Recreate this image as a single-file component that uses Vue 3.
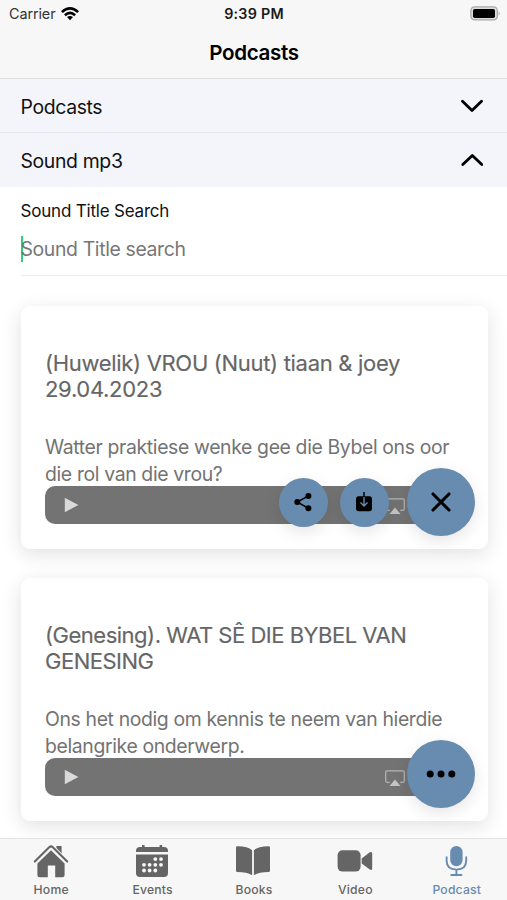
<script setup>
import { ref } from 'vue'

const cards = ref([
  {
    title: ['(Huwelik) VROU (Nuut) tiaan & joey', '29.04.2023'],
    body: ['Watter praktiese wenke gee die Bybel ons oor', 'die rol van die vrou?'],
    open: true,
  },
  {
    title: ['(Genesing). WAT SÊ DIE BYBEL VAN', 'GENESING'],
    body: ['Ons het nodig om kennis te neem van hierdie', 'belangrike onderwerp.'],
    open: false,
  },
])
const tabs = ['Home', 'Events', 'Books', 'Video', 'Podcast']
const active = 'Podcast'
</script>

<template>
  <div class="screen">
    <header class="header">
      <div class="status">
        <div class="carrier">
          <span>Carrier</span>
          <svg class="wifi" viewBox="0 0 18 14" width="18" height="14">
            <g fill="none" stroke="#000" stroke-width="2.6">
              <path d="M.9 5.1Q9-2.3 17.1 5.1" />
              <path d="M3.9 8.3Q9 3.6 14.1 8.3" />
            </g>
            <path d="M6 10.1Q9 7.7 12 10.1L9 13.2Z" fill="#000" />
          </svg>
        </div>
        <div class="clock">9:39 PM</div>
        <div class="power">
          <svg viewBox="0 0 31 15" width="31" height="15">
            <rect x=".9" y=".9" width="26.4" height="13" rx="3.6" fill="#ddd" stroke="#a9a9a9" stroke-width="1.3" />
            <rect x="3" y="3" width="22" height="9" rx="1.8" fill="#000" />
            <path d="M28.6 5.2q2.2 2.2 0 4.6z" fill="#aaa" />
          </svg>
        </div>
      </div>
      <h1 class="heading">Podcasts</h1>
    </header>

    <main class="content">
      <div class="row row-line">
        <span>Podcasts</span>
        <svg viewBox="0 0 22 14" width="22" height="14"><path d="M1.5 2.2 11 11.4 20.5 2.2" class="chevron" /></svg>
      </div>
      <div class="row">
        <span>Sound mp3</span>
        <svg viewBox="0 0 22 14" width="22" height="14"><path d="M1.8 11.6 11.3 2.4 20.8 11.6" class="chevron" /></svg>
      </div>

      <div class="field">
        <label class="label">Sound Title Search</label>
        <div class="input"><span class="caret"></span><span class="placeholder">Sound Title search</span></div>
      </div>

      <section v-for="(card, i) in cards" :key="i" class="card">
        <h2 class="title" :class="'title-' + i">
          <span v-for="line in card.title" :key="line">{{ line }}</span>
        </h2>
        <p class="body">
          <span v-for="line in card.body" :key="line">{{ line }}</span>
        </p>
        <div class="player">
          <svg viewBox="0 0 15 16" width="15" height="16"><path d="M.8.8 14.4 8 .8 15.2Z" fill="#d9d9d9" /></svg>
          <svg class="airplay" viewBox="0 0 20 17" width="20" height="17">
            <path d="M4.7 12.3H2.2Q.7 12.3.7 10.8V2.2Q.7.8 2.2.8H17.8Q19.3.8 19.3 2.2V10.8Q19.3 12.3 17.8 12.3H15.3" fill="none" stroke="#b5b5b5" stroke-width="1.2" />
            <path d="M10 9.6 15.5 16H4.5Z" fill="#c4c4c4" />
          </svg>
        </div>
        <div class="actions">
          <template v-if="card.open">
            <button class="fab small">
              <svg viewBox="0 0 18 20" width="18" height="20">
                <path d="M14.3 3.9 3.4 10.1 14.3 16.2" fill="none" stroke="#000" stroke-width="1.6" />
                <circle cx="14.4" cy="3.9" r="3" /><circle cx="3.3" cy="10.1" r="3" /><circle cx="14.4" cy="16.2" r="3" />
              </svg>
            </button>
            <button class="fab small">
              <svg viewBox="0 0 18 20" width="18" height="20">
                <rect x="1" y="4.3" width="16" height="15" rx="2.7" />
                <path d="M9 5v8.6M5.5 10.4 9 14l3.5-3.6" fill="none" stroke="#688bb0" stroke-width="1.4" />
                <path d="M9 .3v4.2" stroke="#000" stroke-width="1.5" stroke-linecap="round" />
              </svg>
            </button>
          </template>
          <button class="fab">
            <svg v-if="card.open" viewBox="0 0 20 20" width="20" height="20">
              <path d="M2 2 18 18M18 2 2 18" stroke="#000" stroke-width="3.1" stroke-linecap="round" />
            </svg>
            <svg v-else viewBox="0 0 30 8" width="30" height="8">
              <circle cx="4.2" cy="4" r="3.5" /><circle cx="15" cy="4" r="3.5" /><circle cx="25.8" cy="4" r="3.5" />
            </svg>
          </button>
        </div>
      </section>
    </main>

    <nav class="tabs">
      <div v-for="tab in tabs" :key="tab" class="tab" :class="{ active: tab === active }">
        <svg v-if="tab === 'Home'" viewBox="0 0 36 34" width="36" height="34" fill="currentColor">
          <path d="M23.4 2h5.2v10l-5.2-4.8z" />
          <path d="M1.8 17.6 16.2 3.2Q18 1.6 19.8 3.2L34.2 17.6" fill="none" stroke="#f7f7f7" stroke-width="4" />
          <path d="M1.8 17.6 16.2 3.2Q18 1.6 19.8 3.2L34.2 17.6" fill="none" stroke="currentColor" stroke-width="2.1" stroke-linecap="round" />
          <path d="M18 6.3 31.6 19.5V31q0 2.2-2.2 2.2H22.2V21.5h-7.4v11.7H6.6Q4.4 33.2 4.4 31V19.5Z" />
        </svg>
        <svg v-else-if="tab === 'Events'" viewBox="0 0 36 34" width="36" height="34" fill="currentColor">
          <path d="M2 8V7q0-4 4-4h2V1h2.6v2h15V1h2.6v2H30q4 0 4 4v1z" />
          <path d="M2 10.6h32V29q0 4-4 4H6q-4 0-4-4z" />
          <g fill="#f7f7f7">
            <circle v-for="x in [21.3, 27]" :key="'a' + x" :cx="x" cy="15.1" r="1.9" />
            <circle v-for="x in [10, 15.6, 21.3, 27]" :key="'b' + x" :cx="x" cy="20.8" r="1.9" />
            <circle v-for="x in [10, 15.6, 21.3]" :key="'c' + x" :cx="x" cy="26.5" r="1.9" />
          </g>
        </svg>
        <svg v-else-if="tab === 'Books'" viewBox="0 0 36 34" width="36" height="34" fill="currentColor">
          <path d="M17.1 6.2Q13 2.4 2.4 2.2 1 2.2 1 3.6V26.7Q1 28 2.4 28 12 28 17.1 31.2Z" />
          <path d="M18.9 6.2Q23 2.4 33.6 2.2 35 2.2 35 3.6V26.7Q35 28 33.6 28 24 28 18.9 31.2Z" />
        </svg>
        <svg v-else-if="tab === 'Video'" viewBox="0 0 36 34" width="36" height="34" fill="currentColor">
          <rect x=".6" y="6.2" width="23" height="21.4" rx="5" />
          <path d="m24.7 14.4 8.1-6.2q2.4-1 2.4 1.3v14.9q0 2.2-2.4 1.2l-8.1-6.2z" />
        </svg>
        <svg v-else viewBox="0 0 36 34" width="36" height="34">
          <rect x="12.2" y="2" width="12.4" height="20.2" rx="6.2" fill="currentColor" />
          <path d="M8.6 13.2v3.4Q8.6 25.6 18.4 25.6q9.8 0 9.8-9V13.2M18.4 25.6v5.6M13.3 31h10.2" fill="none" stroke="currentColor" stroke-width="1.9" stroke-linecap="round" />
        </svg>
        <span>{{ tab }}</span>
      </div>
    </nav>
  </div>
</template>

<style>
body { margin: 0; overflow: hidden; background: #fff; }
</style>

<style scoped>
* { box-sizing: border-box; }
.screen {
  width: 507px; height: 900px; overflow: hidden; display: flex; flex-direction: column;
  font-family: Inter, "Liberation Sans", sans-serif; color: #111; background: #fff;
}
svg { display: block; flex: none; }
h1, h2, p { margin: 0; font-weight: 400; }
.header { height: 79px; flex: none; background: #f7f7f7; border-bottom: 1px solid #dddddf; }
.status { height: 27px; display: grid; grid-template-columns: 1fr 1fr 1fr; align-items: center; padding: 0 6px 0 9px; font-size: 14.4px; }
.carrier { display: flex; align-items: center; gap: 6px; color: #333; letter-spacing: -.1px; }
.clock { text-align: center; font-weight: 600; font-size: 14.3px; letter-spacing: .25px; margin-right: 2px; color: #1a1a1a; }
.power { display: flex; justify-content: flex-end; }
.heading { height: 51px; line-height: 52px; padding-left: 1px; text-align: center; font-size: 20.6px; font-weight: 600; letter-spacing: -.35px; color: #000; }
.content { flex: 1; min-height: 0; overflow: hidden; }
.row { height: 54px; display: flex; align-items: center; justify-content: space-between; padding: 0 24.5px 0 20.5px; background: #f4f5fa; font-size: 19.4px; letter-spacing: -.35px; }
.row span { padding-top: 2px; }
.row-line { border-bottom: 1px solid #e9eaee; }
.chevron { fill: none; stroke: #000; stroke-width: 2.8; stroke-linecap: round; stroke-linejoin: round; }
.field { height: 89px; margin-left: 20.5px; padding-top: 13px; border-bottom: 1px solid #ececec; }
.label { display: block; height: 23px; line-height: 23px; font-size: 17px; letter-spacing: -.2px; }
.input { display: flex; align-items: center; height: 51px; font-size: 19.4px; letter-spacing: -.36px; color: #777; }
.caret { width: 2.5px; height: 26px; margin-right: -2.5px; background: #2dd36f; }
.card {
  position: relative; width: 467px; height: 243px; margin: 29.5px 0 29px 20.5px; padding: 44px 24.5px 0; border-radius: 9px;
  background: #fff; box-shadow: 0 5px 20px rgba(0, 0, 0, .12);
}
.card + .card { margin-top: 0; }
.title { height: 84px; font-size: 22px; line-height: 26px; color: #666; white-space: nowrap; -webkit-text-stroke: .15px #666; }
.body { height: 52.5px; font-size: 19.4px; line-height: 27px; letter-spacing: -.36px; color: #737373; white-space: nowrap; }
.title span, .body span { display: block; }
.title-0 { letter-spacing: -.31px; }
.title-1 { letter-spacing: -.49px; }
.player { height: 38px; display: flex; align-items: center; justify-content: space-between; padding: 0 58px 0 19px; border-radius: 10px; background: #737373; }
.airplay { margin-top: 2px; }
.actions { position: absolute; right: 13px; top: 162.5px; height: 68px; display: flex; align-items: center; gap: 12px; }
.fab { width: 68px; height: 68px; padding: 0; border: 0; border-radius: 50%; display: flex; align-items: center; justify-content: center; background: #688bb0; box-shadow: 0 5px 16px rgba(0, 0, 0, .1); }
.small { width: 49px; height: 49px; }
.small + .fab:not(.small) { margin-left: 6px; }
.tabs { position: relative; height: 62px; flex: none; display: grid; grid-template-columns: repeat(5, 1fr); background: #f7f7f7; border-top: 1px solid #e2e2e2; }
.tab { display: flex; flex-direction: column; align-items: center; padding-top: 5px; color: #656565; font-size: 12.2px; font-weight: 500; letter-spacing: .2px; }
.tab span { height: 18px; line-height: 18px; margin-top: 3px; padding-left: 1px; }
.active { color: #688bb0; }
</style>
